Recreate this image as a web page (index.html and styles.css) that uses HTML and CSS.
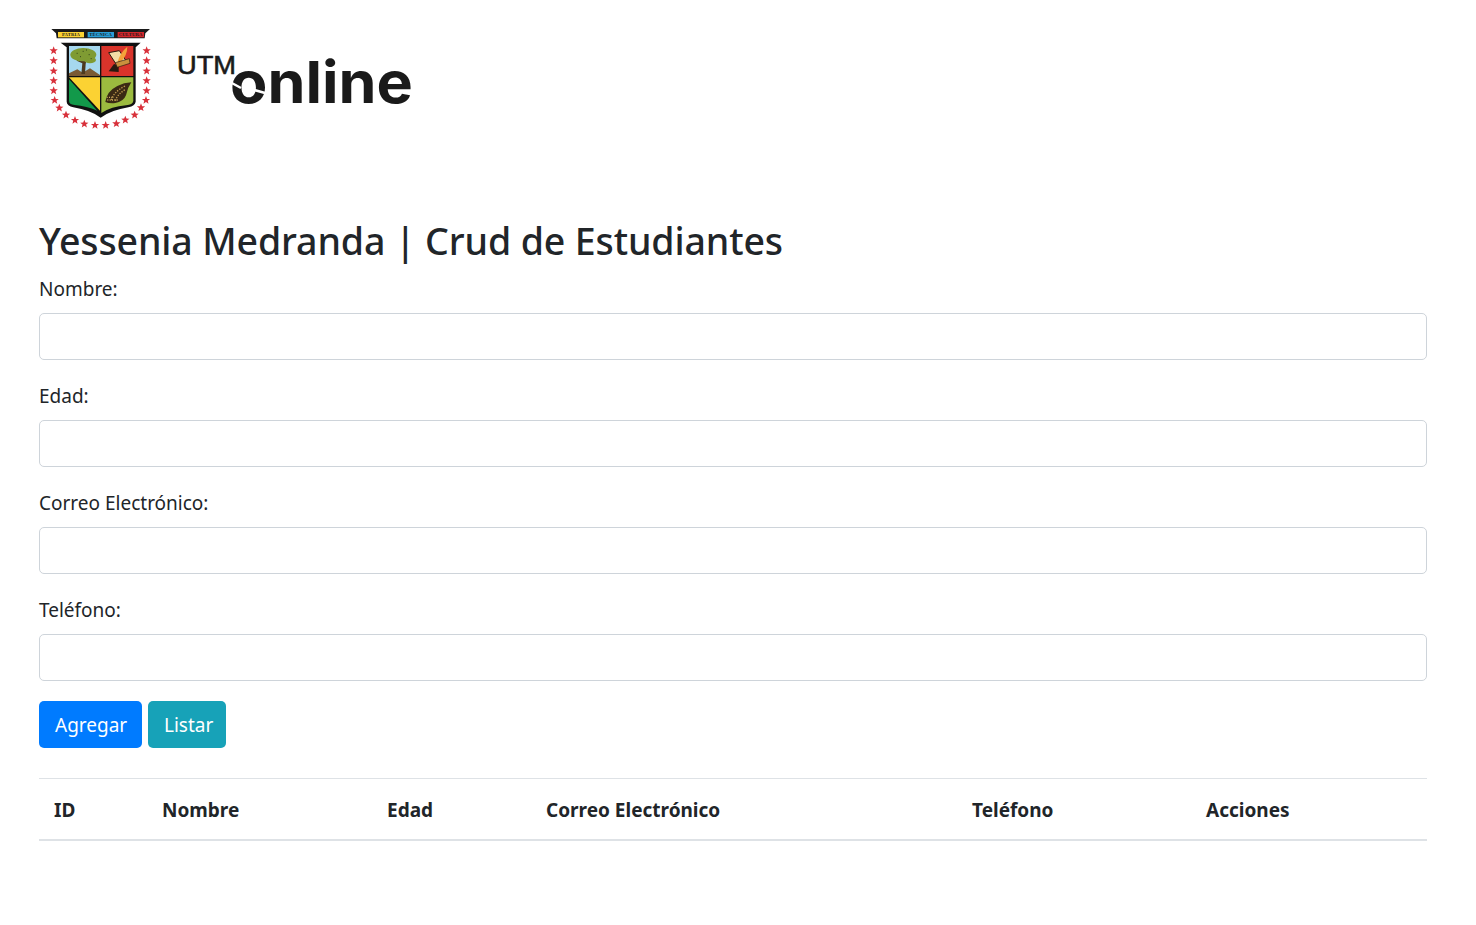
FILE: index.html
```html
<!DOCTYPE html>
<html lang="es">
<head>
  <meta charset="UTF-8">
  <meta name="viewport" content="width=device-width, initial-scale=1.0">
  <title>Crud de Estudiantes</title>
  <link rel="stylesheet" href="styles.css">
</head>
<body>
  <header class="logo-bar">
    <svg class="logo" viewBox="0 0 390 115" width="390" height="115" role="img" aria-label="UTM online">
      <defs>
        <polygon id="star" points="0,-13 3.4,-4.2 12.4,-4 5.3,1.6 7.7,10.4 0,5.3 -7.7,10.4 -5.3,1.6 -12.4,-4 -3.4,-4.2"/>
      </defs>
      <g transform="scale(0.3333)">
        <!-- cinta superior -->
        <polygon points="34,27 330,27 316,40 314,55 50,55 48,40" fill="#1a1a1a"/>
        <rect x="54" y="36" width="78" height="16" fill="#fbd233"/>
        <rect x="143" y="36" width="79" height="16" fill="#2a9fd8"/>
        <rect x="233" y="36" width="79" height="16" fill="#d3272b"/>
        <text class="ribbon" x="93" y="49">PATRIA</text>
        <text class="ribbon" x="182" y="49">TÉCNICA</text>
        <text class="ribbon" x="272" y="49">CULTURA</text>
        <!-- escudo -->
        <path d="M62 68 H302 L287 82 V245 Q285 258 265 262 Q215 270 182 293 Q150 270 100 262 Q81 258 80 245 V82 Z" fill="#111"/>
        <rect x="87" y="78" width="93" height="90" fill="#a6d8ef"/>
        <rect x="184" y="78" width="96" height="90" fill="#d9342b"/>
        <path d="M184 172 H280 V243 Q278 254 258 256 Q214 260 184 279 Z" fill="#9cbb3f"/>
        <path d="M87 172 H180 V272 Z" fill="#fbd233"/>
        <path d="M87 178 L172 272 Q140 258 104 255 Q87 253 87 242 Z" fill="#12994a"/>
        <!-- arbol -->
        <path d="M87 168 V160 L112 148 L128 158 L150 145 L180 165 V168 Z" fill="#7a5a34"/>
        <path d="M124 162 L127 130 L110 122 L113 117 L130 120 L142 112 L137 132 L135 162 Z" fill="#4d3a1f"/>
        <ellipse cx="130" cy="104" rx="39" ry="20" fill="#7f9b33"/>
        <ellipse cx="150" cy="120" rx="18" ry="10" fill="#7f9b33"/>
        <path d="M110 100 h3 M128 94 h3 M146 104 h3 M120 110 h3 M152 116 h3 M138 90 h3" stroke="#33431a" stroke-width="3"/>
        <!-- libro y pluma -->
        <path d="M206 98 L238 92 L258 122 L228 132 Z" fill="#f3dca6" stroke="#2a1a10" stroke-width="3"/>
        <path d="M232 128 Q240 98 262 80 Q262 108 240 128 Z" fill="#f4a23a"/>
        <path d="M206 154 L222 132 L236 136 L236 156 Z" fill="#2a1a10"/>
        <path d="M226 128 L268 116 L270 130 L232 142 Z" fill="#c9913d" stroke="#2a1a10" stroke-width="2"/>
        <!-- cornucopia -->
        <path d="M196 246 Q200 214 232 198 Q252 188 274 187 Q262 204 258 226 Q250 246 226 249 Q208 251 196 246 Z" fill="#3a2a14"/>
        <path d="M214 240 Q222 214 256 198 M226 242 Q234 220 258 208" fill="none" stroke="#c09a4e" stroke-width="4" stroke-dasharray="4 4"/>
        <path d="M202 240 H236 M200 232 H222" fill="none" stroke="#d2ae62" stroke-width="4" stroke-dasharray="3 4"/>
        <!-- estrellas -->
        <g fill="#d8303a">
          <use href="#star" x="41" y="92"/><use href="#star" x="41" y="122"/><use href="#star" x="41" y="153"/>
          <use href="#star" x="41" y="182"/><use href="#star" x="41" y="212"/><use href="#star" x="44" y="241"/>
          <use href="#star" x="58" y="264"/><use href="#star" x="78" y="285"/><use href="#star" x="105" y="301"/>
          <use href="#star" x="133" y="312"/><use href="#star" x="165" y="316"/><use href="#star" x="197" y="316"/>
          <use href="#star" x="229" y="311"/><use href="#star" x="256" y="300"/><use href="#star" x="284" y="285"/>
          <use href="#star" x="303" y="263"/><use href="#star" x="318" y="241"/><use href="#star" x="320" y="212"/>
          <use href="#star" x="320" y="182"/><use href="#star" x="320" y="153"/><use href="#star" x="320" y="122"/>
          <use href="#star" x="320" y="92"/>
        </g>
      </g>
      <text class="logo-utm" x="137" y="54" textLength="59" lengthAdjust="spacingAndGlyphs">UTM</text>
      <text class="logo-online" x="190" y="83" textLength="183" lengthAdjust="spacingAndGlyphs">online</text>
      <path d="M211 69 L225 73 M190 62 L201 68" stroke="#fff" stroke-width="2.5" fill="none"/>
    </svg>
  </header>

  <main class="content">
    <h1>Yessenia Medranda | Crud de Estudiantes</h1>
    <form class="student-form">
      <div class="form-group">
        <label for="nombre">Nombre:</label>
        <input type="text" id="nombre" class="form-control">
      </div>
      <div class="form-group">
        <label for="edad">Edad:</label>
        <input type="text" id="edad" class="form-control">
      </div>
      <div class="form-group">
        <label for="correo">Correo Electrónico:</label>
        <input type="text" id="correo" class="form-control">
      </div>
      <div class="form-group">
        <label for="telefono">Teléfono:</label>
        <input type="text" id="telefono" class="form-control">
      </div>
      <div class="actions">
        <button type="button" class="btn btn-primary">Agregar</button>
        <button type="button" class="btn btn-info">Listar</button>
      </div>
    </form>

    <table class="table">
      <colgroup>
        <col class="col-id">
        <col class="col-nombre">
        <col class="col-edad">
        <col class="col-correo">
        <col class="col-telefono">
        <col class="col-acciones">
      </colgroup>
      <thead>
        <tr>
          <th>ID</th>
          <th>Nombre</th>
          <th>Edad</th>
          <th>Correo Electrónico</th>
          <th>Teléfono</th>
          <th>Acciones</th>
        </tr>
      </thead>
    </table>
  </main>
</body>
</html>
```

FILE: styles.css
```css
* {
  box-sizing: border-box;
}
body {
  margin: 0;
  background-color: #fff;
  color: #212529;
  font-family: "Noto Sans", "Open Sans", sans-serif;
  font-size: 19px;
  line-height: 30px;
}
.logo-bar {
  padding: 20px 0 0 40px;
  height: 217px;
}
.logo {
  display: block;
}
.ribbon {
  font-family: "Liberation Serif", serif;
  font-size: 14px;
  font-weight: bold;
  letter-spacing: 0.5px;
  fill: #1a1a1a;
  text-anchor: middle;
}
.logo-utm {
  font-family: "Liberation Sans", sans-serif;
  font-size: 26px;
  stroke: #1a1a1a;
  stroke-width: 0.6px;
  fill: #1a1a1a;
}
.logo-online {
  font-family: Inter, sans-serif;
  font-size: 58px;
  font-weight: 700;
  fill: #1a1a1a;
}
.content {
  padding: 0 49px 0 39px;
}
h1 {
  margin: 0 0 8px;
  font-size: 37.5px;
  font-weight: 500;
  line-height: 48px;
  letter-spacing: -0.12px;
}
.form-group {
  margin-bottom: 20px;
}
label {
  display: block;
  padding-top: 1px;
  margin-bottom: 9px;
}
.form-control {
  display: block;
  width: 100%;
  height: 47px;
  padding: 7.5px 15px;
  border: 1px solid #ced4da;
  border-radius: 5px;
  background-color: #fff;
  color: #495057;
  font: inherit;
}
.actions {
  display: flex;
  gap: 6px;
}
.btn {
  height: 47px;
  padding: 7.5px 15px;
  border: 1px solid transparent;
  border-radius: 5px;
  color: #fff;
  font: inherit;
  cursor: pointer;
}
.btn-primary {
  width: 103px;
  background-color: #007bff;
}
.btn-info {
  width: 78px;
  background-color: #17a2b8;
}
.table {
  width: 100%;
  margin-top: 30px;
  border-collapse: collapse;
  table-layout: fixed;
}
.table th {
  padding: 16px 15px 14px;
  border-top: 1px solid #dee2e6;
  border-bottom: 2px solid #dee2e6;
  font-weight: 700;
  text-align: left;
}
.col-id { width: 108px; }
.col-nombre { width: 225px; }
.col-edad { width: 159px; }
.col-correo { width: 426px; }
.col-telefono { width: 234px; }
.col-acciones { width: 236px; }
```
